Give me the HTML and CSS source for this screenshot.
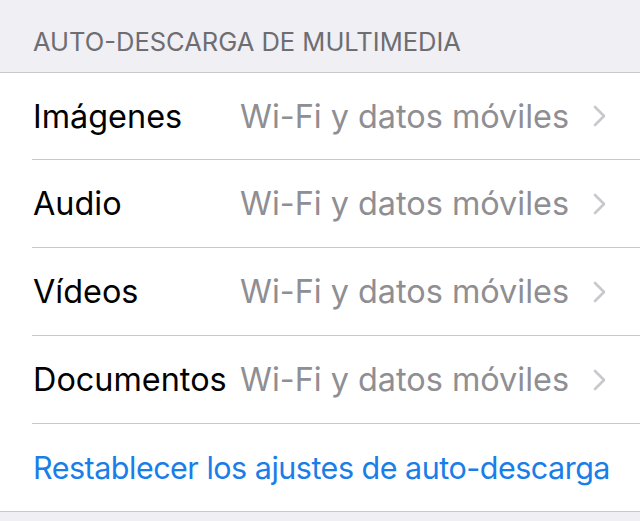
FILE: index.html
```html
<!DOCTYPE html>
<html lang="es">
<head>
<meta charset="utf-8">
<link rel="stylesheet" href="styles.css">
</head>
<body>
<div class="page">
  <div class="section-header">AUTO-DESCARGA DE MULTIMEDIA</div>
  <div class="group">
    <div class="row first">
      <span class="label">Imágenes</span>
      <span class="value">Wi-Fi y datos móviles</span>
      <svg class="chev" width="14" height="22" viewBox="0 0 14 22"><path d="M2 2 L11 11 L2 20" fill="none" stroke="#c7c7cc" stroke-width="2.6" stroke-linecap="round" stroke-linejoin="round"/></svg>
    </div>
    <div class="row">
      <span class="label">Audio</span>
      <span class="value">Wi-Fi y datos móviles</span>
      <svg class="chev" width="14" height="22" viewBox="0 0 14 22"><path d="M2 2 L11 11 L2 20" fill="none" stroke="#c7c7cc" stroke-width="2.6" stroke-linecap="round" stroke-linejoin="round"/></svg>
    </div>
    <div class="row">
      <span class="label">Vídeos</span>
      <span class="value">Wi-Fi y datos móviles</span>
      <svg class="chev" width="14" height="22" viewBox="0 0 14 22"><path d="M2 2 L11 11 L2 20" fill="none" stroke="#c7c7cc" stroke-width="2.6" stroke-linecap="round" stroke-linejoin="round"/></svg>
    </div>
    <div class="row">
      <span class="label">Documentos</span>
      <span class="value">Wi-Fi y datos móviles</span>
      <svg class="chev" width="14" height="22" viewBox="0 0 14 22"><path d="M2 2 L11 11 L2 20" fill="none" stroke="#c7c7cc" stroke-width="2.6" stroke-linecap="round" stroke-linejoin="round"/></svg>
    </div>
    <div class="row link-row">
      <span class="link">Restablecer los ajustes de auto-descarga</span>
    </div>
  </div>
</div>
</body>
</html>
```
FILE: styles.css
```css
html, body {
  margin: 0;
  padding: 0;
  background: #efeff4;
}
.page {
  width: 640px;
  height: 521px;
  overflow: hidden;
  font-family: Inter, "Noto Sans", sans-serif;
}
.section-header {
  height: 72px;
  box-sizing: border-box;
  padding: 27px 0 0 33px;
  font-size: 25.5px;
  line-height: 30px;
  color: #6d6d72;
}
.group {
  background: #fff;
  border-top: 1px solid #c8c7cc;
  border-bottom: 1px solid #c8c7cc;
}
.row {
  display: flex;
  align-items: center;
  height: 88px;
  box-sizing: border-box;
  margin-left: 32px;
  padding-right: 33px;
  border-top: 1px solid #c8c7cc;
  font-size: 32.4px;
  white-space: nowrap;
}
.row.first {
  border-top: none;
  height: 86px;
}
.label {
  color: #000;
  flex: 1;
  padding-left: 1px;
}
.value {
  color: #8e8e93;
  margin-right: 24px;
}
.chev {
  display: block;
}
.link {
  color: #1a7ee8;
  padding-left: 1px;
  font-size: 30.5px;
  letter-spacing: -0.5px;
}
```
